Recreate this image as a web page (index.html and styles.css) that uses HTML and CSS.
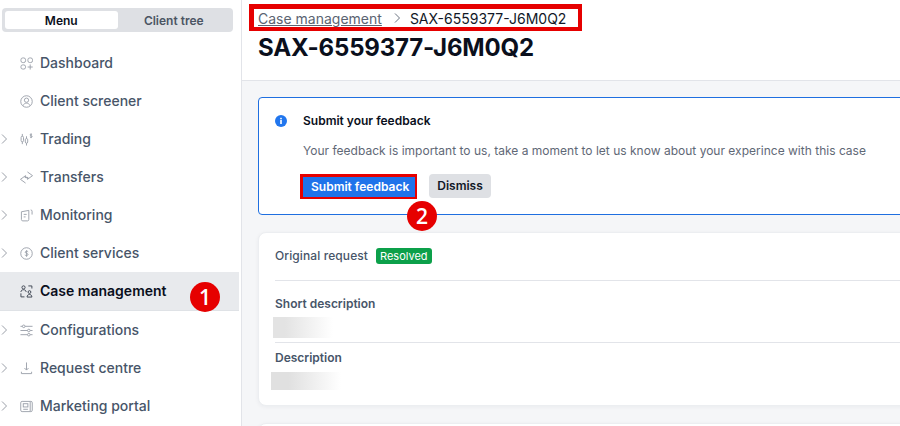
FILE: index.html
```html
<!DOCTYPE html>
<html lang="en">
<head>
<meta charset="utf-8">
<title>SAX-6559377-J6M0Q2</title>
<link rel="stylesheet" href="styles.css">
</head>
<body>
<div class="app">
  <aside class="sidebar">
    <div class="toggle">
      <div class="tab tab-on">Menu</div>
      <div class="tab">Client tree</div>
    </div>
    <nav class="nav">
      <a class="item"><span class="chev"></span>
        <svg class="ico" viewBox="0 0 14 14"><rect x="1" y="1" width="5" height="5" rx="2"/><rect x="8.500" y="1" width="5" height="5" rx="2"/><rect x="1" y="8.500" width="5" height="4.500" rx="2"/><path d="M11 8v5.500M8.200 10.800h5.500"/></svg>
        <span class="name">Dashboard</span></a>
      <a class="item"><span class="chev"></span>
        <svg class="ico" viewBox="0 0 14 14"><circle cx="7" cy="7" r="6.200"/><circle cx="7" cy="5.600" r="2.300"/><path d="M3.200 11.500c.8-1.900 2.200-2.700 3.800-2.700s3 .8 3.800 2.700"/></svg>
        <span class="name">Client screener</span></a>
      <a class="item"><span class="chev"><svg viewBox="0 0 6 10"><path d="M1 .5l4.500 4.500L1 9.500"/></svg></span>
        <svg class="ico" viewBox="0 0 14 14"><path d="M2.500 1v2.500M2.500 9.500V12M7 3.500V6M7 11v2.500"/><rect x="1.200" y="3.500" width="2.600" height="6" rx="1.300"/><rect x="5.700" y="6" width="2.600" height="5" rx="1.300"/><path d="M13 1.800c-.4-.7-2.200-.7-2.200.3 0 1.100 2.300.6 2.300 1.800 0 1-1.900 1-2.400.2M11.900.5v5"/></svg>
        <span class="name">Trading</span></a>
      <a class="item"><span class="chev"><svg viewBox="0 0 6 10"><path d="M1 .5l4.500 4.500L1 9.500"/></svg></span>
        <svg class="ico" viewBox="0 0 14 14"><path d="M8 1l5.500 4L8 9V6.800H5M6 13L.5 9 6 5v2.200h3"/></svg>
        <span class="name">Transfers</span></a>
      <a class="item"><span class="chev"><svg viewBox="0 0 6 10"><path d="M1 .5l4.500 4.500L1 9.500"/></svg></span>
        <svg class="ico" viewBox="0 0 14 14"><path d="M1.500 3l8-1.500v9.700c0 1-.5 1.600-1.400 1.600H3c-.9 0-1.500-.6-1.500-1.500zM4 5.800h3.200M4 8.500h2M11.500 1c1 0 1.500.5 1.500 1.500v3.500"/></svg>
        <span class="name">Monitoring</span></a>
      <a class="item"><span class="chev"><svg viewBox="0 0 6 10"><path d="M1 .5l4.500 4.500L1 9.500"/></svg></span>
        <svg class="ico" viewBox="0 0 14 14"><circle cx="7" cy="7" r="6.200"/><path d="M8.800 5.200C8.300 4.300 5.600 4.200 5.600 5.600c0 1.500 3 .9 3 2.500 0 1.400-2.800 1.300-3.400.4M7.100 3.400v7.200"/></svg>
        <span class="name">Client services</span></a>
      <a class="item item-on"><span class="chev"></span>
        <svg class="ico ico-on" viewBox="0 0 14 14"><circle cx="3.800" cy="2.600" r="1.700"/><path d="M1 7.500c0-1.500 1.200-2.400 2.800-2.400s2.800.9 2.800 2.400M9 1h3.800v2.800M1 9v3.800h3.800"/><circle cx="10.200" cy="7.600" r="1.500"/><path d="M7.600 13c0-1.700 1.100-2.800 2.600-2.800s2.600 1.100 2.600 2.800z"/></svg>
        <span class="name">Case management</span></a>
      <a class="item"><span class="chev"><svg viewBox="0 0 6 10"><path d="M1 .5l4.500 4.500L1 9.500"/></svg></span>
        <svg class="ico" viewBox="0 0 14 14"><path d="M.5 2.500h2M5.500 2.500h8M.5 7h7.500M11 7h2.500M.5 11.500h7.500M11 11.500h2.500"/><circle cx="4" cy="2.500" r="1.400"/><circle cx="9.500" cy="7" r="1.400"/><circle cx="9.500" cy="11.500" r="1.400"/></svg>
        <span class="name">Configurations</span></a>
      <a class="item"><span class="chev"><svg viewBox="0 0 6 10"><path d="M1 .5l4.500 4.500L1 9.500"/></svg></span>
        <svg class="ico" viewBox="0 0 14 14"><path d="M7 .5v8M4.800 6.500L7 8.700l2.200-2.200M1.500 10.500v2h11v-2"/></svg>
        <span class="name">Request centre</span></a>
      <a class="item"><span class="chev"><svg viewBox="0 0 6 10"><path d="M1 .5l4.500 4.500L1 9.500"/></svg></span>
        <svg class="ico" viewBox="0 0 14 14"><rect x=".8" y="1.500" width="12.400" height="11" rx="1.500"/><rect x="3.500" y="4" width="5" height="3.500"/><path d="M3.500 10h5M11 2v10"/></svg>
        <span class="name">Marketing portal</span></a>
    </nav>
    <span class="num num-one">1</span>
  </aside>
  <main class="main">
    <header class="head">
      <div class="crumbs">
        <a class="crumb-link">Case management</a>
        <svg class="crumb-sep" viewBox="0 0 6 10"><path d="M1 .5l4.500 4.500L1 9.500"/></svg>
        <span class="crumb-now">SAX-6559377-J6M0Q2</span>
      </div>
      <h1 class="title">SAX-6559377-J6M0Q2</h1>
    </header>
    <div class="content">
      <section class="alert">
        <svg class="info" viewBox="0 0 12 12"><circle cx="6" cy="6" r="6" fill="#2176ee"/><rect x="5.200" y="5" width="1.600" height="4" fill="#fff"/><rect x="5.200" y="2.800" width="1.600" height="1.500" fill="#fff"/></svg>
        <div class="alert-body">
          <h2 class="alert-title">Submit your feedback</h2>
          <p class="alert-text">Your feedback is important to us, take a moment to let us know about your experince with this case</p>
          <div class="actions">
            <button class="btn btn-primary">Submit feedback</button>
            <button class="btn btn-muted">Dismiss</button>
            <span class="num num-two">2</span>
          </div>
        </div>
      </section>
      <section class="card">
        <div class="card-head">
          <span class="card-title">Original request</span>
          <span class="badge">Resolved</span>
        </div>
        <div class="field field-short">
          <div class="label">Short description</div>
          <div class="blur blur-a"></div>
        </div>
        <div class="field field-long">
          <div class="label">Description</div>
          <div class="blur blur-b"></div>
        </div>
      </section>
      <section class="card card-next"></section>
    </div>
  </main>
</div>
</body>
</html>
```
FILE: styles.css
```css
* { box-sizing: border-box; }
html, body { margin: 0; height: 100%; overflow: hidden; }
body { font-family: Inter, "Liberation Sans", sans-serif; background: #fff; color: #111827; }
.app { display: flex; width: 900px; height: 426px; overflow: hidden; }

.sidebar { position: relative; flex: 0 0 242px; border-right: 1px solid #e2e4e9; background: #fff; padding: 8px 0 0; }
.toggle { display: flex; margin: 0 8px 0 2px; height: 24px; padding: 3px; background: #dee0e4; border-radius: 4px; }
.tab { flex: 1; display: flex; align-items: center; justify-content: center; font-size: 12px; font-weight: 600; color: #4b5563; border-radius: 3px; }
.tab-on { background: #fff; color: #0a0f1c; }
.nav { display: flex; flex-direction: column; margin-top: 12px; }
.item { display: flex; align-items: center; height: 38px; width: 239px; font-size: 14px; font-weight: 500; color: #475569; flex: none; }
.name { margin-bottom: 2px; }
.item-on { height: 39px; background: #e8eaed; border-bottom: 1px solid #dfe2e6; color: #0a0f1c; font-weight: 600; }
.chev { flex: 0 0 20px; height: 10px; padding-left: 1px; display: flex; }
.chev svg { width: 6px; height: 10px; fill: none; stroke: #9a9fa8; stroke-width: 1; }
.ico { flex: none; width: 13px; height: 13px; margin-right: 7px; fill: none; stroke: #9aa0aa; stroke-width: 1; }
.ico-on { stroke: #3a424f; }

.main { flex: 1; min-width: 0; display: flex; flex-direction: column; }
.head { flex: 0 0 81px; background: #fff; border-bottom: 1px solid #e2e4e9; padding: 4px 0 0 16px; }
.crumbs { display: flex; align-items: center; width: fit-content; height: 27px; margin-left: -9px; padding: 0 12px 0 4px; border-style: solid; border-color: #e60000; border-width: 5px 4px 4px 5px; font-size: 14px; }
.crumb-link { color: #5b6472; text-decoration: underline; }
.crumb-sep { width: 6px; height: 10px; margin: 0 10px 0 12px; fill: none; stroke: #6b7280; stroke-width: 1; }
.crumb-now { color: #111827; }
.title { margin: 2px 0 0; font-size: 24px; line-height: 29px; font-weight: 700; letter-spacing: -.17px; color: #0a0f1c; }

.content { flex: 1; min-height: 0; background: #f5f6f8; padding: 16px 0 0 16px; display: flex; flex-direction: column; gap: 17px; }
.alert { flex: none; display: flex; width: 700px; height: 118px; border: 1px solid #1f6fe0; border-radius: 4px; background: #fff; padding: 16px; gap: 16px; }
.info { flex: none; width: 12px; height: 12px; margin-top: 1px; }
.alert-body { flex: 1; }
.alert-title { margin: 0; font-size: 12px; line-height: 14px; font-weight: 600; color: #0a0f1c; }
.alert-text { margin: 15px 0 0; font-size: 12px; line-height: 16px; letter-spacing: .01px; color: #5f6876; white-space: nowrap; }
.actions { position: relative; display: flex; align-items: flex-start; gap: 16px; margin-top: 15px; }
.btn { border: 0; height: 24px; border-radius: 4px; font: 600 12px Inter, "Liberation Sans", sans-serif; padding: 0 8px 2px; }
.btn-primary { background: #1f73ea; color: #fff; width: 117px; height: 25px; margin-left: -3px; padding: 0 0 2px 8px; text-align: left; border-radius: 0; border-style: solid; border-color: #e60000; border-width: 3px 2px 2px 3px; }
.btn-muted { background: #dee0e4; color: #111827; width: 62px; margin-left: -4px; }
.num { position: absolute; display: flex; align-items: center; justify-content: center; width: 30px; height: 30px; border-radius: 50%; background: #e60000; color: #fff; font: 600 21px/1 "Open Sans", sans-serif; }
.num-one { left: 190px; top: 282px; }
.num-two { left: 104px; top: 27px; }

.card { flex: none; width: 700px; height: 174px; background: #fff; border: 1px solid #eceef1; border-radius: 8px; box-shadow: 0 1px 4px rgba(20, 30, 50, .05); padding: 0 0 0 16px; }
.card-head { display: flex; align-items: center; gap: 8px; height: 48px; padding-bottom: 2px; border-bottom: 1px solid #e2e4e9; font-size: 12px; }
.card-title { color: #475569; font-weight: 500; letter-spacing: .1px; }
.badge { background: #0ca04a; color: #fff; font-size: 11px; font-weight: 400; line-height: 14px; padding: 1px 4px; border-radius: 3px; }
.field { position: relative; }
.field-short { height: 62px; border-bottom: 1px solid #e2e4e9; padding-top: 15px; }
.label { font-size: 12px; line-height: 16px; font-weight: 600; color: #475569; }
.field-long { padding-top: 7px; }
.blur { position: absolute; }
.blur-a { left: -2px; top: 36px; width: 60px; height: 21px; background: linear-gradient(90deg, #e3e3e3 20%, #fff); }
.blur-b { left: -4px; top: 29px; width: 70px; height: 18px; background: linear-gradient(90deg, #e0e0e0 25%, #fff); }
.card-next { height: 60px; }
```
